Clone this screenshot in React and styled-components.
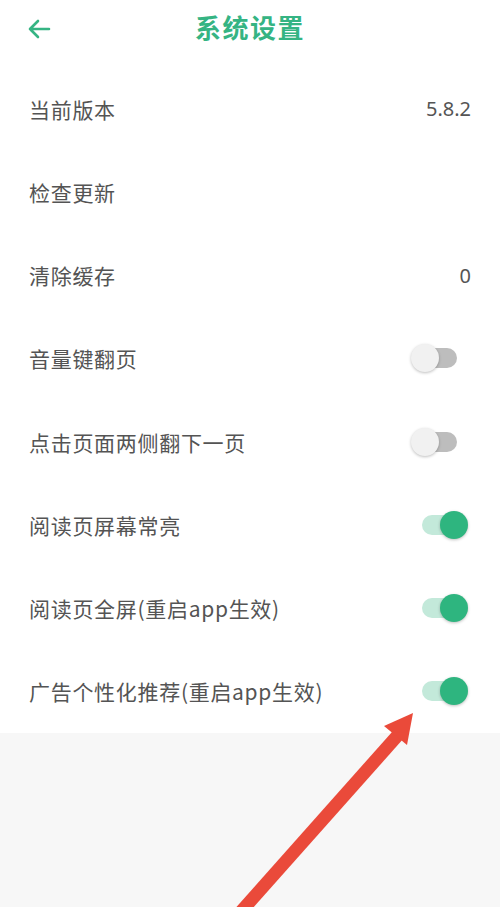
import styled, { createGlobalStyle } from "styled-components";

const GlobalStyle = createGlobalStyle`
  html, body {
    margin: 0;
    padding: 0;
    background: #f7f7f7;
  }
  body {
    font-family: "Noto Sans CJK SC", "Noto Sans", sans-serif;
  }
`;

const Page = styled.div`
  position: relative;
  width: 500px;
  height: 907px;
  overflow: hidden;
  background: #f7f7f7;
`;

const Header = styled.header`
  height: 67px;
  background: #ffffff;
  display: flex;
  align-items: center;
  justify-content: center;
  position: relative;
  padding-bottom: 14px;
  box-sizing: border-box;
`;

const BackButton = styled.button`
  position: absolute;
  left: 24px;
  top: 16px;
  width: 30px;
  height: 26px;
  padding: 0;
  border: none;
  background: none;
  display: flex;
  align-items: center;
  justify-content: center;
`;

const Title = styled.h1`
  margin: 0;
  font-size: 26px;
  font-weight: 700;
  color: #35b483;
  letter-spacing: 1.5px;
`;

const List = styled.div`
  background: #ffffff;
`;

const Row = styled.div`
  height: 83.25px;
  display: flex;
  align-items: center;
  justify-content: space-between;
  padding: 0 29px 0 29px;
  box-sizing: border-box;
`;

const Label = styled.span`
  font-size: 21px;
  color: #545454;
  letter-spacing: 0.7px;
`;

const Value = styled.span`
  font-size: 20px;
  color: #555555;
  font-family: "Noto Sans", sans-serif;
`;

const Switch = styled.div`
  position: relative;
  width: 57px;
  height: 30px;
  margin-right: 3px;
`;

const Track = styled.div`
  position: absolute;
  left: 11px;
  width: 35px;
  top: 5px;
  height: 20px;
  border-radius: 10px;
  background: ${(p) => (p.$on ? "#c3e9da" : "#bdbdbd")};
`;

const Thumb = styled.div`
  position: absolute;
  top: 1px;
  left: ${(p) => (p.$on ? "29px" : "0")};
  width: 28px;
  height: 28px;
  border-radius: 50%;
  background: ${(p) => (p.$on ? "#2eb57f" : "#f1f1f1")};
  box-shadow: 0 1px 3px rgba(0, 0, 0, 0.25);
`;

const Overlay = styled.svg`
  position: absolute;
  left: 0;
  top: 0;
  pointer-events: none;
`;

function Toggle({ on }) {
  return (
    <Switch>
      <Track $on={on} />
      <Thumb $on={on} />
    </Switch>
  );
}

const rows = [
  { label: "当前版本", value: "5.8.2" },
  { label: "检查更新" },
  { label: "清除缓存", value: "0" },
  { label: "音量键翻页", toggle: false },
  { label: "点击页面两侧翻下一页", toggle: false },
  { label: "阅读页屏幕常亮", toggle: true },
  { label: "阅读页全屏(重启app生效)", toggle: true },
  { label: "广告个性化推荐(重启app生效)", toggle: true },
];

export default function App() {
  return (
    <Page>
      <GlobalStyle />
      <Header>
        <BackButton>
          <svg width="24" height="22" viewBox="0 0 24 22" fill="none">
            <path
              d="M22 11H3M11 3L3 11L11 19"
              stroke="#35b483"
              strokeWidth="2.6"
              strokeLinecap="round"
              strokeLinejoin="round"
            />
          </svg>
        </BackButton>
        <Title>系统设置</Title>
      </Header>
      <List>
        {rows.map((r) => (
          <Row key={r.label}>
            <Label>{r.label}</Label>
            {r.value !== undefined && <Value>{r.value}</Value>}
            {r.toggle !== undefined && <Toggle on={r.toggle} />}
          </Row>
        ))}
      </List>
      <Overlay width="500" height="907" viewBox="0 0 500 907">
        <line x1="238" y1="915" x2="398" y2="735" stroke="#ea4a3a" strokeWidth="13" />
        <polygon points="413,713 384,726 407,745" fill="#ea4a3a" />
      </Overlay>
    </Page>
  );
}
